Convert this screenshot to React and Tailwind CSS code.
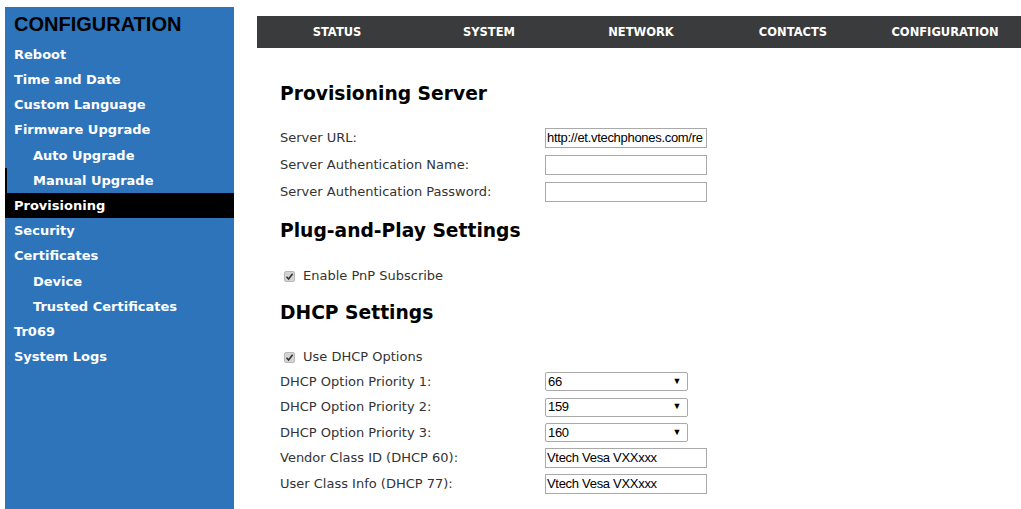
import React from "react";

const menu = [
  { label: "Reboot" },
  { label: "Time and Date" },
  { label: "Custom Language" },
  { label: "Firmware Upgrade" },
  { label: "Auto Upgrade", sub: true },
  { label: "Manual Upgrade", sub: true, edge: true },
  { label: "Provisioning", active: true },
  { label: "Security" },
  { label: "Certificates" },
  { label: "Device", sub: true },
  { label: "Trusted Certificates", sub: true },
  { label: "Tr069" },
  { label: "System Logs" },
];

const tabs = ["STATUS", "SYSTEM", "NETWORK", "CONTACTS", "CONFIGURATION"];

const verdana = "font-['DejaVu_Sans',Verdana,sans-serif]";
const arial = "font-['Liberation_Sans',Arial,sans-serif]";

const TextBox = ({ value = "" }) => (
  <div
    className={`w-[162px] h-[20px] border border-[#a9a9a9] bg-white px-[1px] text-[13px] leading-[18px] text-black overflow-hidden whitespace-nowrap tracking-[-0.3px] ${arial}`}
  >
    {value}
  </div>
);

const Select = ({ value }) => (
  <div
    className={`w-[143px] h-[19px] border border-[#a9a9a9] rounded-[2px] bg-white pl-[2px] pr-[6px] flex items-center justify-between text-[13px] text-black tracking-[-0.3px] ${arial}`}
  >
    <span>{value}</span>
    <span className="text-[9px]">▼</span>
  </div>
);

const Check = () => (
  <div className="w-[11px] h-[11px] rounded-[2px] bg-[#d4d4d4] border border-[#b8b8b8] flex items-center justify-center">
    <svg width="9" height="9" viewBox="0 0 9 9">
      <path d="M1.5 4.8 L3.6 7 L7.6 1.8" fill="none" stroke="#333" strokeWidth="1.6" />
    </svg>
  </div>
);

const Row = ({ label, children }) => (
  <div className="flex items-center h-[25px]">
    <div className="w-[265px] text-[13px] text-[#333]">{label}</div>
    {children}
  </div>
);

const Heading = ({ children, className = "" }) => (
  <h2 className={`text-[18.7px] font-bold text-black h-[24px] leading-[24px] ${className}`}>{children}</h2>
);

export default function App() {
  return (
    <div className={`w-[1021px] h-[509px] bg-white flex overflow-hidden ${verdana}`}>
      {/* side menu */}
      <div className="ml-[5px] mt-[7px] w-[229px] bg-[#2e74ba] shrink-0">
        <div className={`pl-[9px] pt-[6px] h-[34px] text-[20px] font-bold text-black leading-[22px] ${arial}`}>
          CONFIGURATION
        </div>
        <div className="mt-[1px]">
          {menu.map((item) => (
            <div
              key={item.label}
              className={`h-[25.2px] flex items-center text-[13px] font-bold text-white ${
                item.sub ? "pl-[28px]" : "pl-[9px]"
              } ${item.active ? "bg-black" : ""} ${item.edge ? "border-l-2 border-black" : ""}`}
            >
              <span className={item.edge ? "-ml-[2px]" : ""}>{item.label}</span>
            </div>
          ))}
        </div>
      </div>

      <div className="ml-[23px] flex-1">
        {/* top tabs */}
        <div className="mt-[16px] h-[32px] pt-[2px] pl-[4px] bg-[#3a3b3d] grid grid-cols-5 items-center">
          {tabs.map((t) => (
            <div key={t} className="text-center text-[11.5px] font-bold text-white">
              {t}
            </div>
          ))}
        </div>

        <div className="pl-[23px]">
          <Heading className="mt-[34px]">Provisioning Server</Heading>
          <div className="mt-[19px] flex flex-col gap-[2px]">
            <Row label="Server URL:">
              <TextBox value="http://et.vtechphones.com/re" />
            </Row>
            <Row label="Server Authentication Name:">
              <TextBox />
            </Row>
            <Row label="Server Authentication Password:">
              <TextBox />
            </Row>
          </div>

          <Heading className="mt-[15px]">Plug-and-Play Settings</Heading>
          <div className="mt-[25px] flex items-center gap-[8px] pl-[4px] h-[16px] text-[13px] text-[#333]">
            <Check />
            <span>Enable PnP Subscribe</span>
          </div>

          <Heading className="mt-[17px]">DHCP Settings</Heading>
          <div className="mt-[24px] flex items-center gap-[8px] pl-[4px] h-[16px] text-[13px] text-[#333]">
            <Check />
            <span>Use DHCP Options</span>
          </div>
          <div className="mt-[4px] flex flex-col gap-[0.5px]">
            <Row label="DHCP Option Priority 1:">
              <Select value="66" />
            </Row>
            <Row label="DHCP Option Priority 2:">
              <Select value="159" />
            </Row>
            <Row label="DHCP Option Priority 3:">
              <Select value="160" />
            </Row>
            <Row label="Vendor Class ID (DHCP 60):">
              <TextBox value="Vtech Vesa VXXxxx" />
            </Row>
            <Row label="User Class Info (DHCP 77):">
              <TextBox value="Vtech Vesa VXXxxx" />
            </Row>
          </div>
        </div>
      </div>
    </div>
  );
}
